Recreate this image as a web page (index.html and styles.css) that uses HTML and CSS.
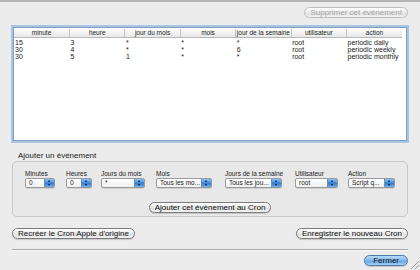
FILE: index.html
```html
<!DOCTYPE html>
<html lang="fr">
<head>
    <meta charset="UTF-8">
    <title>Cron</title>
    <link rel="stylesheet" href="styles.css">
</head>
<body>
    <div class="window">
        <div class="top-bar">
            <button class="btn" disabled>Supprimer cet événement</button>
        </div>

        <div class="table-box">
            <table class="cron">
                <thead>
                    <tr>
                        <th>minute</th>
                        <th>heure</th>
                        <th>jour du mois</th>
                        <th>mois</th>
                        <th>jour de la semaine</th>
                        <th>utilisateur</th>
                        <th>action</th>
                    </tr>
                </thead>
                <tbody>
                    <tr><td>15</td><td>3</td><td>*</td><td>*</td><td>*</td><td>root</td><td>periodic daily</td></tr>
                    <tr><td>30</td><td>4</td><td>*</td><td>*</td><td>6</td><td>root</td><td>periodic weekly</td></tr>
                    <tr><td>30</td><td>5</td><td>1</td><td>*</td><td>*</td><td>root</td><td>periodic monthly</td></tr>
                </tbody>
            </table>
        </div>

        <div class="group-title">Ajouter un événement</div>
        <div class="group">
            <div class="fields">
                <div class="field f-min">
                    <label>Minutes</label>
                    <div class="popup"><span>0</span><i class="step"></i></div>
                </div>
                <div class="field f-hour">
                    <label>Heures</label>
                    <div class="popup"><span>0</span><i class="step"></i></div>
                </div>
                <div class="field f-day">
                    <label>Jours du mois</label>
                    <div class="popup"><span>*</span><i class="step"></i></div>
                </div>
                <div class="field f-month">
                    <label>Mois</label>
                    <div class="popup"><span>Tous les mo...</span><i class="step"></i></div>
                </div>
                <div class="field f-week">
                    <label>Jours de la semaine</label>
                    <div class="popup"><span>Tous les jou...</span><i class="step"></i></div>
                </div>
                <div class="field f-user">
                    <label>Utilisateur</label>
                    <div class="popup"><span>root</span><i class="step"></i></div>
                </div>
                <div class="field f-action">
                    <label>Action</label>
                    <div class="popup"><span>Script q...</span><i class="step"></i></div>
                </div>
            </div>
            <div class="add-row">
                <button class="btn">Ajouter cet événement au Cron</button>
            </div>
        </div>

        <div class="actions">
            <button class="btn">Recréer le Cron Apple d'origine</button>
            <button class="btn">Enregistrer le nouveau Cron</button>
        </div>

        <div class="sep"></div>

        <div class="footer">
            <button class="btn default">Fermer</button>
        </div>
        <div class="grip"></div>
    </div>
</body>
</html>
```

FILE: styles.css
```css
body {
    margin: 0;
    background: #ececec;
    font-family: "Liberation Sans", Arial, sans-serif;
    color: #1a1a1a;
}
.window {
    position: relative;
    width: 420px;
    height: 270px;
    box-sizing: border-box;
    border-top: 2px solid #b4b4b4;
    padding: 0 12px;
    display: flex;
    flex-direction: column;
}
.top-bar {
    display: flex;
    justify-content: flex-end;
    padding-top: 5px;
}
.btn {
    font-family: "Liberation Sans", Arial, sans-serif;
    font-size: 8px;
    height: 11px;
    line-height: 9px;
    padding: 0 5px;
    border: 1px solid #7b7b7b;
    border-radius: 6px;
    background: linear-gradient(#ffffff, #e9e9e9 50%, #dcdcdc 51%, #f4f4f4);
    color: #111;
    box-shadow: 0 1px 1px rgba(0, 0, 0, 0.15);
    white-space: nowrap;
}
.btn[disabled] {
    color: #a8a8a8;
    border-color: #bdbdbd;
    box-shadow: none;
}
.btn.default {
    background: linear-gradient(#b8dcfa, #7fb7ea 50%, #5e9ede 51%, #a4d2f8);
    border-color: #5078a8;
    padding: 0 8px;
}
.table-box {
    margin-top: 9px;
    height: 114px;
    box-sizing: border-box;
    background: #fff;
    border: 1px solid #7f9ec4;
    box-shadow: 0 0 0 2px #a9c4e4;
    margin-left: 1px;
    margin-right: 1px;
    padding-top: 1px;
    overflow: hidden;
}
.cron {
    width: 388px;
    border-collapse: collapse;
    table-layout: fixed;
    font-size: 7px;
}
.cron th {
    height: 8px;
    padding: 0;
    font-size: 6.5px;
    font-weight: normal;
    text-align: center;
    white-space: nowrap;
    overflow: hidden;
    color: #222;
    background: linear-gradient(#fdfdfd, #e6e6e6);
    border-right: 1px solid #c4c4c4;
    border-bottom: 1px solid #b8b8b8;
    line-height: 8px;
}
.cron th:first-child,
.cron td:first-child {
    width: 55px;
}
.cron th:last-child {
    border-right: none;
}
.cron td {
    padding: 0 1px;
    line-height: 7px;
    height: 7px;
    white-space: nowrap;
}
.cron tbody tr:first-child td {
    padding-top: 1px;
}
.group-title {
    margin-top: 10px;
    padding-left: 6px;
    font-size: 8px;
    line-height: 10px;
}
.group {
    height: 56px;
    box-sizing: border-box;
    border: 1px solid #c8c8c8;
    border-radius: 5px;
    background: #e8e8e8;
    padding: 8px 0 0 12px;
}
.fields {
    display: flex;
}
.field {
    display: flex;
    flex-direction: column;
}
.field label {
    font-size: 6.5px;
    line-height: 8px;
    white-space: nowrap;
}
.popup {
    display: flex;
    align-items: center;
    height: 8px;
    border: 1px solid #9a9a9a;
    border-radius: 2px;
    background: linear-gradient(#fff, #f0f0f0);
    font-size: 6.5px;
    box-shadow: 0 1px 0 rgba(0, 0, 0, 0.1);
}
.popup span {
    flex: 1;
    padding-left: 3px;
    overflow: hidden;
    white-space: nowrap;
    line-height: 8px;
}
.step {
    width: 9px;
    height: 8px;
    background: linear-gradient(#8cc4f4, #3d8ade 50%, #2e74cc 51%, #6fb2ee);
    border-left: 1px solid #6d8fb8;
    position: relative;
}
.step::before,
.step::after {
    content: "";
    position: absolute;
    left: 3px;
    border-left: 1.5px solid transparent;
    border-right: 1.5px solid transparent;
}
.step::before {
    top: 1px;
    border-bottom: 2px solid #111;
}
.step::after {
    bottom: 1px;
    border-top: 2px solid #111;
}
.f-min { width: 30px; margin-right: 11px; }
.f-hour { width: 26px; margin-right: 9px; }
.f-day { width: 44px; margin-right: 11px; }
.f-month { width: 56px; margin-right: 13px; }
.f-week { width: 57px; margin-right: 13px; }
.f-user { width: 43px; margin-right: 10px; }
.f-action { width: 47px; }
.add-row {
    margin-top: 14px;
    display: flex;
    justify-content: center;
    padding-right: 12px;
}
.actions {
    margin-top: 11px;
    display: flex;
    justify-content: space-between;
}
.sep {
    margin-top: 10px;
    height: 1px;
    background: #a9a9a9;
    border-bottom: 1px solid #f8f8f8;
}
.footer {
    margin-top: 4px;
    display: flex;
    justify-content: flex-end;
}
.grip {
    position: absolute;
    right: 1px;
    bottom: 1px;
    width: 8px;
    height: 8px;
    background: linear-gradient(135deg, transparent 45%, #9a9a9a 45%, #9a9a9a 52%, transparent 52%, transparent 70%, #9a9a9a 70%, #9a9a9a 77%, transparent 77%);
}
```
